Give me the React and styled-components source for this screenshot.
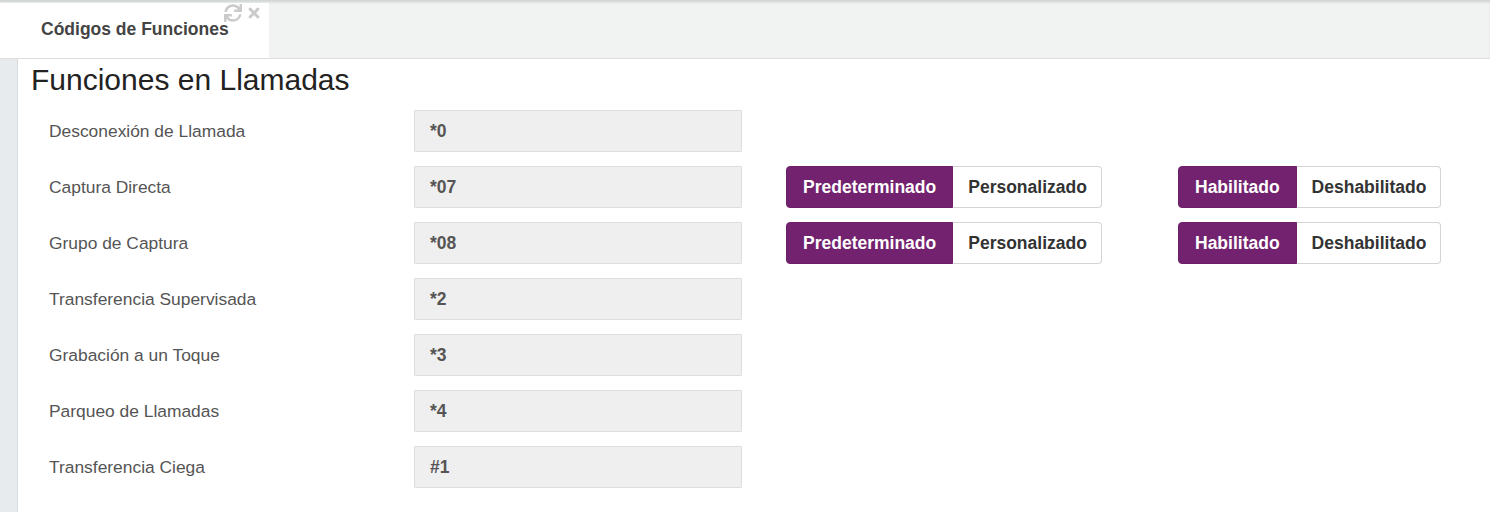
import React from 'react'
import styled, { createGlobalStyle } from 'styled-components'
import { FaSync, FaTimes } from 'react-icons/fa'

const GlobalStyle = createGlobalStyle`
  body {
    margin: 0;
    font-family: "Liberation Sans", Arial, sans-serif;
    background: #fff;
  }
`

const rows = [
  { label: 'Desconexión de Llamada', code: '*0' },
  { label: 'Captura Directa', code: '*07', toggles: true },
  { label: 'Grupo de Captura', code: '*08', toggles: true },
  { label: 'Transferencia Supervisada', code: '*2' },
  { label: 'Grabación a un Toque', code: '*3' },
  { label: 'Parqueo de Llamadas', code: '*4' },
  { label: 'Transferencia Ciega', code: '#1' },
]

function App() {
  return (
    <>
      <GlobalStyle />
      <TabBar>
        <Tab>
          <TabTitle>Códigos de Funciones</TabTitle>
          <TabTools>
            <FaSync size={18} />
            <FaTimes size={16} />
          </TabTools>
        </Tab>
      </TabBar>
      <Body>
        <Strip />
        <Content>
          <Heading>Funciones en Llamadas</Heading>
          <Form>
            {rows.map((r) => (
              <Row key={r.label}>
                <Label>{r.label}</Label>
                <CodeInput>{r.code}</CodeInput>
                {r.toggles ? (
                  <>
                    <Group>
                      <Toggle active>Predeterminado</Toggle>
                      <Toggle>Personalizado</Toggle>
                    </Group>
                    <Group>
                      <Toggle active>Habilitado</Toggle>
                      <Toggle>Deshabilitado</Toggle>
                    </Group>
                  </>
                ) : null}
              </Row>
            ))}
          </Form>
        </Content>
      </Body>
    </>
  )
}

const TabBar = styled.div`
  height: 58px;
  background: #f1f2f2;
  border-bottom: 1px solid #dcdede;
  box-shadow: inset 0 3px 3px -1px #cfd1d1;
  display: flex;
  align-items: flex-end;
`

const Tab = styled.div`
  position: relative;
  width: 269px;
  height: 55px;
  background: #fff;
  display: flex;
  align-items: center;
  padding-left: 41px;
  box-sizing: border-box;
`

const TabTitle = styled.span`
  font-size: 17.5px;
  font-weight: bold;
  color: #444;
  margin-top: -2px;
`

const TabTools = styled.div`
  position: absolute;
  top: 1px;
  right: 7px;
  display: flex;
  align-items: center;
  gap: 4px;
  color: #cacaca;
`

const Body = styled.div`
  display: flex;
  min-height: 453px;
`

const Strip = styled.div`
  width: 17px;
  background: #e8ebed;
  border-right: 1px solid #d9dcde;
  flex-shrink: 0;
`

const Content = styled.div`
  flex: 1;
  padding: 5px 0 0 13px;
`

const Heading = styled.h1`
  margin: 0;
  font-size: 30px;
  font-weight: normal;
  line-height: 32px;
  color: #222;
`

const Form = styled.div`
  margin-top: 14px;
  display: flex;
  flex-direction: column;
  gap: 14px;
  padding-left: 18px;
`

const Row = styled.div`
  display: grid;
  grid-template-columns: 365px 372px 392px auto;
  align-items: center;
  height: 42px;
`

const Label = styled.div`
  font-size: 17.4px;
  color: #555;
`

const CodeInput = styled.div`
  width: 328px;
  height: 42px;
  box-sizing: border-box;
  background: #efefef;
  border: 1px solid #dddddd;
  border-radius: 1px;
  padding: 0 15px;
  display: flex;
  align-items: center;
  font-size: 17.5px;
  font-weight: bold;
  color: #555;
`

const Group = styled.div`
  display: flex;
  height: 42px;
  width: max-content;
`

const Toggle = styled.div`
  height: 42px;
  box-sizing: border-box;
  padding: ${(p) => (p.active ? '0 16px' : '0 14px 0 15px')};
  display: flex;
  align-items: center;
  font-size: 17.5px;
  font-weight: bold;
  color: ${(p) => (p.active ? '#fff' : '#333')};
  background: ${(p) => (p.active ? '#73226f' : '#fff')};
  border: 1px solid ${(p) => (p.active ? '#6c1f68' : '#d4d4d4')};
  border-radius: ${(p) => (p.active ? '4px 0 0 4px' : '0 4px 4px 0')};
  ${(p) => (p.active ? '' : 'border-left: none;')}
`

export default App
